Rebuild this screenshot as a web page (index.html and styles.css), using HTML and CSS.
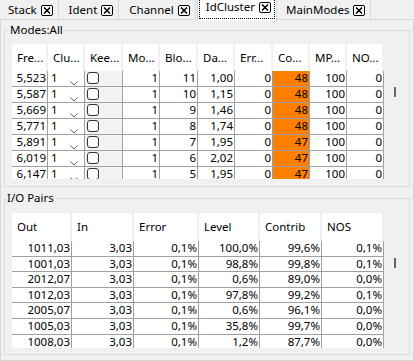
FILE: index.html
```html
<!DOCTYPE html>
<html lang="en">
<head>
    <meta charset="UTF-8">
    <title>IdCluster</title>
    <link rel="stylesheet" href="styles.css">
</head>
<body>
    <div class="tabs">
        <div class="tab">Stack<span class="close"><svg width="8" height="7" viewBox="0 0 8 7"><path d="M1 0.5L7 6.5M7 0.5L1 6.5" stroke="#000" stroke-width="1.5"/></svg></span></div>
        <div class="tab">Ident<span class="close"><svg width="8" height="7" viewBox="0 0 8 7"><path d="M1 0.5L7 6.5M7 0.5L1 6.5" stroke="#000" stroke-width="1.5"/></svg></span></div>
        <div class="tab">Channel<span class="close"><svg width="8" height="7" viewBox="0 0 8 7"><path d="M1 0.5L7 6.5M7 0.5L1 6.5" stroke="#000" stroke-width="1.5"/></svg></span></div>
        <div class="tab active">IdCluster<span class="close"><svg width="8" height="7" viewBox="0 0 8 7"><path d="M1 0.5L7 6.5M7 0.5L1 6.5" stroke="#000" stroke-width="1.5"/></svg></span></div>
        <div class="tab">MainModes<span class="close"><svg width="8" height="7" viewBox="0 0 8 7"><path d="M1 0.5L7 6.5M7 0.5L1 6.5" stroke="#000" stroke-width="1.5"/></svg></span></div>
    </div>

    <div class="panel">
        <fieldset class="group">
            <legend>Modes:All</legend>
            <div class="view view-modes">
                <table class="grid">
                    <colgroup>
                        <col class="w36"><col class="w37"><col class="w38"><col class="w37"><col class="w38">
                        <col class="w37"><col class="w38"><col class="w37"><col class="w37"><col class="w37">
                    </colgroup>
                    <thead>
                        <tr><th>Fre...</th><th>Clu...</th><th>Kee...</th><th>Mo...</th><th>Blo...</th><th>Da...</th><th>Err...</th><th>Co...</th><th>MP...</th><th>NO...</th></tr>
                    </thead>
                    <tbody>
                        <tr><td>5,523</td><td class="combo">1<svg class="chev" width="8" height="5" viewBox="0 0 8 5"><path d="M0.5 0.5L4 4L7.5 0.5" fill="none" stroke="#666"/></svg></td><td class="check"><span class="box"></span></td><td>1</td><td>11</td><td>1,00</td><td>0</td><td class="hot">48</td><td>100</td><td>0</td></tr>
                        <tr><td>5,587</td><td class="combo">1<svg class="chev" width="8" height="5" viewBox="0 0 8 5"><path d="M0.5 0.5L4 4L7.5 0.5" fill="none" stroke="#666"/></svg></td><td class="check"><span class="box"></span></td><td>1</td><td>10</td><td>1,15</td><td>0</td><td class="hot">48</td><td>100</td><td>0</td></tr>
                        <tr><td>5,669</td><td class="combo">1<svg class="chev" width="8" height="5" viewBox="0 0 8 5"><path d="M0.5 0.5L4 4L7.5 0.5" fill="none" stroke="#666"/></svg></td><td class="check"><span class="box"></span></td><td>1</td><td>9</td><td>1,46</td><td>0</td><td class="hot">48</td><td>100</td><td>0</td></tr>
                        <tr><td>5,771</td><td class="combo">1<svg class="chev" width="8" height="5" viewBox="0 0 8 5"><path d="M0.5 0.5L4 4L7.5 0.5" fill="none" stroke="#666"/></svg></td><td class="check"><span class="box"></span></td><td>1</td><td>8</td><td>1,74</td><td>0</td><td class="hot">48</td><td>100</td><td>0</td></tr>
                        <tr><td>5,891</td><td class="combo">1<svg class="chev" width="8" height="5" viewBox="0 0 8 5"><path d="M0.5 0.5L4 4L7.5 0.5" fill="none" stroke="#666"/></svg></td><td class="check"><span class="box"></span></td><td>1</td><td>7</td><td>1,95</td><td>0</td><td class="hot">47</td><td>100</td><td>0</td></tr>
                        <tr><td>6,019</td><td class="combo">1<svg class="chev" width="8" height="5" viewBox="0 0 8 5"><path d="M0.5 0.5L4 4L7.5 0.5" fill="none" stroke="#666"/></svg></td><td class="check"><span class="box"></span></td><td>1</td><td>6</td><td>2,02</td><td>0</td><td class="hot">47</td><td>100</td><td>0</td></tr>
                        <tr><td>6,147</td><td class="combo">1<svg class="chev" width="8" height="5" viewBox="0 0 8 5"><path d="M0.5 0.5L4 4L7.5 0.5" fill="none" stroke="#666"/></svg></td><td class="check"><span class="box"></span></td><td>1</td><td>5</td><td>1,95</td><td>0</td><td class="hot">47</td><td>100</td><td>0</td></tr>
                    </tbody>
                </table>
                <div class="thumb"></div>
            </div>
        </fieldset>

        <fieldset class="group group-io">
            <legend>I/O Pairs</legend>
            <div class="view view-io">
                <table class="grid">
                    <colgroup>
                        <col class="w60"><col class="w62"><col class="w65"><col class="w61"><col class="w62"><col class="w62">
                    </colgroup>
                    <thead>
                        <tr><th>Out</th><th>In</th><th>Error</th><th>Level</th><th>Contrib</th><th>NOS</th></tr>
                    </thead>
                    <tbody>
                        <tr><td>1011,03</td><td>3,03</td><td>0,1%</td><td>100,0%</td><td>99,6%</td><td>0,1%</td></tr>
                        <tr><td>1001,03</td><td>3,03</td><td>0,1%</td><td>98,8%</td><td>99,8%</td><td>0,1%</td></tr>
                        <tr><td>2012,07</td><td>3,03</td><td>0,1%</td><td>0,6%</td><td>89,0%</td><td>0,0%</td></tr>
                        <tr><td>1012,03</td><td>3,03</td><td>0,1%</td><td>97,8%</td><td>99,2%</td><td>0,1%</td></tr>
                        <tr><td>2005,07</td><td>3,03</td><td>0,1%</td><td>0,6%</td><td>96,1%</td><td>0,0%</td></tr>
                        <tr><td>1005,03</td><td>3,03</td><td>0,1%</td><td>35,8%</td><td>99,7%</td><td>0,0%</td></tr>
                        <tr><td>1008,03</td><td>3,03</td><td>0,1%</td><td>1,2%</td><td>87,7%</td><td>0,0%</td></tr>
                    </tbody>
                </table>
                <div class="thumb"></div>
            </div>
        </fieldset>
    </div>
</body>
</html>
```

FILE: styles.css
```css
* {
    box-sizing: border-box;
}
body {
    margin: 0;
    width: 414px;
    height: 361px;
    overflow: hidden;
    font-family: "Noto Sans", "Segoe UI", sans-serif;
    font-size: 11.5px;
    color: #000;
    background: #f0f0f0;
}

/* tab strip */
.tabs {
    display: flex;
    height: 20px;
    position: relative;
    z-index: 1;
}
.tab {
    display: flex;
    align-items: flex-start;
    height: 19px;
    margin-right: 2px;
    padding: 3px 5px 0 8px;
    line-height: 14px;
    white-space: nowrap;
    background: #f0f0f0;
    border-right: 1px solid #d9d9d9;
}
.tab.active {
    position: relative;
    height: 21px;
    margin-left: -1px;
    margin-right: 1px;
    padding-top: 0;
    background: #fff;
    border-left: 1px solid #d9d9d9;
}
.tab.active::after {
    content: "";
    position: absolute;
    left: 1px;
    right: 1px;
    top: -2px;
    bottom: 2px;
    border: 1px dotted #000;
}
.close {
    display: flex;
    align-items: center;
    justify-content: center;
    width: 12px;
    height: 11px;
    margin: 2px 0 0 4px;
    border: 1px solid #000;
    border-radius: 2px;
    background: #fff;
}

/* page */
.panel {
    height: 342px;
    margin-top: -1px;
    padding: 3px;
    border: 1px solid #d9d9d9;
}
.group {
    margin: 0;
    padding: 0;
    border: 1px solid #dcdcdc;
}
.group legend {
    margin-left: 4px;
    padding: 0 1px;
    line-height: 14px;
}
.group-io {
    margin-top: 4px;
}
.group-io legend {
    margin-left: 1px;
}
.view {
    position: relative;
    height: 135px;
    margin: 7px;
    overflow: hidden;
}
.view-io {
    margin-top: 8px;
    margin-bottom: 6px;
}
.thumb {
    position: absolute;
    right: 6px;
    top: 43px;
    width: 2px;
    height: 10px;
    background: #666;
}
.view-io .thumb {
    top: 45px;
}

/* grids */
.grid {
    table-layout: fixed;
    border-collapse: separate;
    border-spacing: 0;
    width: 372px;
}
.w36 { width: 36px; }
.w37 { width: 37px; }
.w38 { width: 38px; }
.w60 { width: 60px; }
.w61 { width: 61px; }
.w62 { width: 62px; }
.w65 { width: 65px; }
.grid th {
    height: 27px;
    padding: 0 0 0 5px;
    font-weight: normal;
    text-align: left;
    line-height: 14px;
    white-space: nowrap;
    overflow: hidden;
    background: #fff;
    border-right: 2px solid #f0f0f0;
}
.view-io .grid th {
    height: 28px;
}
.grid td {
    height: 15.6px;
    padding: 0 1px 0 2px;
    line-height: 14px;
    text-align: right;
    vertical-align: top;
    white-space: nowrap;
    overflow: hidden;
    background: #fff;
    border-right: 1px solid #a0a0a0;
    border-bottom: 1px solid #a0a0a0;
}
.grid td.combo {
    text-align: left;
    padding-left: 3px;
}
.chev {
    float: right;
    margin: 10px 5px 0 0;
}
.grid td.check {
    padding: 0;
    background: #f3f3f3;
}
.box {
    display: block;
    width: 12px;
    height: 12px;
    margin: 1px 0 0 2px;
    border: 1px solid #333;
    border-radius: 3px;
    background: #fff;
}
.grid td.hot {
    background: #ff8000;
}
```
